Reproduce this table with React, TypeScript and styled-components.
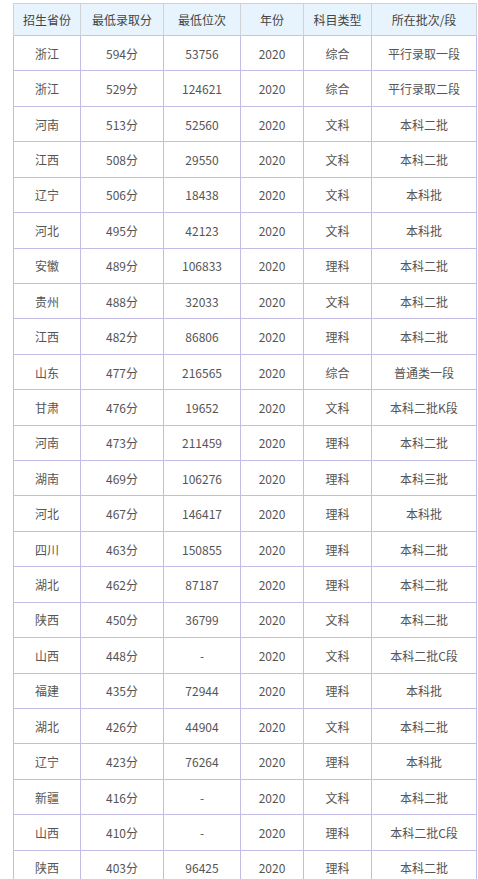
import React from "react";
import styled, { createGlobalStyle } from "styled-components";

const Global = createGlobalStyle`
  html, body { margin: 0; padding: 0; background: #fff; }
  body { font-family: "Noto Sans CJK SC", "Microsoft YaHei", sans-serif; overflow: hidden; }
`;

const Page = styled.div`
  padding: 3px 0 0 13px;
  width: 478px;
  height: 879px;
  box-sizing: border-box;
  overflow: hidden;
`;

const Grid = styled.div`
  display: grid;
  grid-template-columns: 68px 83px 77px 63px 68px 105px;
  width: 464px;
`;

const HeadCell = styled.div<{ $first?: boolean }>`
  height: 33px;
  box-sizing: border-box;
  background: #e8f4fd;
  border-top: 1px solid #cfd3d8;
  border-bottom: 1px solid #c9c4e6;
  border-right: 1px solid #cfd3d8;
  border-left: ${(p) => (p.$first ? "1px solid #cfd3d8" : "none")};
  display: flex;
  align-items: center;
  justify-content: center;
  font-size: 12px;
  color: #444;
  white-space: nowrap;
`;

const Cell = styled.div<{ $first?: boolean }>`
  height: 35.43px;
  box-sizing: border-box;
  border-bottom: 1px solid #c3bce6;
  border-right: 1px solid #c3bce6;
  border-left: ${(p) => (p.$first ? "1px solid #c3bce6" : "none")};
  display: flex;
  align-items: center;
  justify-content: center;
  font-size: 12px;
  color: #555;
  white-space: nowrap;
`;

const headers = ["招生省份", "最低录取分", "最低位次", "年份", "科目类型", "所在批次/段"];

const rows: string[][] = [
  ["浙江", "594分", "53756", "2020", "综合", "平行录取一段"],
  ["浙江", "529分", "124621", "2020", "综合", "平行录取二段"],
  ["河南", "513分", "52560", "2020", "文科", "本科二批"],
  ["江西", "508分", "29550", "2020", "文科", "本科二批"],
  ["辽宁", "506分", "18438", "2020", "文科", "本科批"],
  ["河北", "495分", "42123", "2020", "文科", "本科批"],
  ["安徽", "489分", "106833", "2020", "理科", "本科二批"],
  ["贵州", "488分", "32033", "2020", "文科", "本科二批"],
  ["江西", "482分", "86806", "2020", "理科", "本科二批"],
  ["山东", "477分", "216565", "2020", "综合", "普通类一段"],
  ["甘肃", "476分", "19652", "2020", "文科", "本科二批K段"],
  ["河南", "473分", "211459", "2020", "理科", "本科二批"],
  ["湖南", "469分", "106276", "2020", "理科", "本科三批"],
  ["河北", "467分", "146417", "2020", "理科", "本科批"],
  ["四川", "463分", "150855", "2020", "理科", "本科二批"],
  ["湖北", "462分", "87187", "2020", "理科", "本科二批"],
  ["陕西", "450分", "36799", "2020", "文科", "本科二批"],
  ["山西", "448分", "-", "2020", "文科", "本科二批C段"],
  ["福建", "435分", "72944", "2020", "理科", "本科批"],
  ["湖北", "426分", "44904", "2020", "文科", "本科二批"],
  ["辽宁", "423分", "76264", "2020", "理科", "本科批"],
  ["新疆", "416分", "-", "2020", "文科", "本科二批"],
  ["山西", "410分", "-", "2020", "理科", "本科二批C段"],
  ["陕西", "403分", "96425", "2020", "理科", "本科二批"],
];

export default function App() {
  return (
    <>
      <Global />
      <Page>
        <Grid>
          {headers.map((h, i) => (
            <HeadCell key={h} $first={i === 0}>
              {h}
            </HeadCell>
          ))}
          {rows.map((r, ri) =>
            r.map((c, ci) => (
              <Cell key={`${ri}-${ci}`} $first={ci === 0}>
                {c}
              </Cell>
            ))
          )}
        </Grid>
      </Page>
    </>
  );
}
